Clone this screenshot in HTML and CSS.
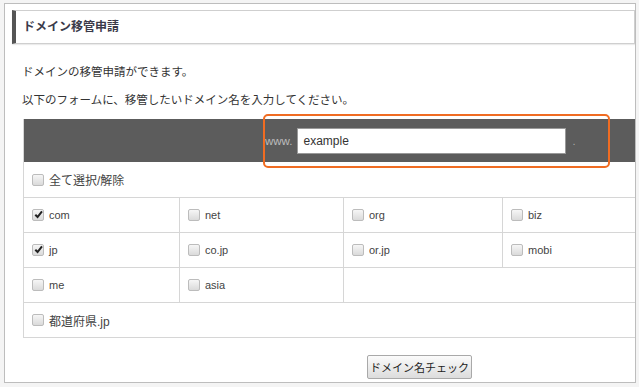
FILE: index.html
```html
<!DOCTYPE html>
<html lang="ja">
<head>
  <meta charset="UTF-8" />
  <title>ドメイン移管申請</title>
  <link rel="stylesheet" href="styles.css">
</head>
<body>

<div id="frame">
  <h2 class="heading">ドメイン移管申請</h2>

  <div class="intro">
    <p>ドメインの移管申請ができます。</p>
    <p>以下のフォームに、移管したいドメイン名を入力してください。</p>
  </div>

  <div class="domain-table">
    <div class="table-head">
      <span class="www">www.</span>
      <span class="name-input">example</span>
      <span class="dot">.</span>
      <div class="highlight"></div>
    </div>

    <div class="row row-full first">
      <div class="cell"><span class="cb"></span>全て選択/解除</div>
    </div>

    <div class="row">
      <div class="cell"><span class="cb checked"><svg viewBox="0 0 12 12"><path d="M2.5 6.2 L5 8.8 L9.8 2.6" /></svg></span>com</div>
      <div class="cell"><span class="cb"></span>net</div>
      <div class="cell"><span class="cb"></span>org</div>
      <div class="cell"><span class="cb"></span>biz</div>
    </div>

    <div class="row">
      <div class="cell"><span class="cb checked"><svg viewBox="0 0 12 12"><path d="M2.5 6.2 L5 8.8 L9.8 2.6" /></svg></span>jp</div>
      <div class="cell"><span class="cb"></span>co.jp</div>
      <div class="cell"><span class="cb"></span>or.jp</div>
      <div class="cell"><span class="cb"></span>mobi</div>
    </div>

    <div class="row">
      <div class="cell"><span class="cb"></span>me</div>
      <div class="cell"><span class="cb"></span>asia</div>
      <div class="cell span2"></div>
    </div>

    <div class="row row-full">
      <div class="cell"><span class="cb"></span>都道府県.jp</div>
    </div>
  </div>

  <div class="actions">
    <button>ドメイン名チェック</button>
  </div>
</div>

</body>
</html>
```

FILE: styles.css
```css
body, html {
  margin: 0;
  background: #f4f4f4;
  font-family: "Liberation Sans", "Noto Sans CJK JP", sans-serif;
  color: #333;
}

#frame {
  margin: 3px 0 0 4px;
  width: 632px;
  height: 380px;
  box-sizing: border-box;
  border: 1px solid #bdbdbd;
  background: white;
  padding: 6px 0 0 7px;
  overflow: hidden;
}

.heading {
  margin: 0;
  height: 34px;
  box-sizing: border-box;
  border: 1px solid #cfcfcf;
  border-left: 4px solid #555;
  padding-left: 7px;
  font-size: 12px;
  line-height: 32px;
  font-weight: bold;
  color: #3a3a4a;
  box-shadow: 0 1px 1px rgb(0 0 0 / 0.08);
}

.intro {
  margin: 14px 0 0 10px;
}

.intro p {
  margin: 0;
  font-size: 11.5px;
  line-height: 28px;
}

.domain-table {
  margin: 5px 0 0 11px;
  width: 640px;
  border-left: 1px solid #d6d6d6;
}

.table-head {
  position: relative;
  height: 43px;
  background: #5c5c5c;
  display: flex;
  align-items: center;
  padding-left: 241px;
}

.www {
  color: #bdbdbd;
  font-size: 11.5px;
}

.name-input {
  margin-left: 5px;
  width: 269px;
  height: 26px;
  box-sizing: border-box;
  border: 1px solid #999;
  background: white;
  padding-left: 5px;
  font-size: 12px;
  line-height: 24px;
  color: #333;
}

.dot {
  margin-left: 6px;
  color: #aaa;
  font-size: 11px;
}

.highlight {
  position: absolute;
  left: 239px;
  top: -5px;
  width: 347px;
  height: 54px;
  box-sizing: border-box;
  border: 2.5px solid #f06c22;
  border-radius: 5px;
}

.row {
  display: grid;
  grid-template-columns: 156px 164px 159px 161px;
  height: 35px;
  box-sizing: border-box;
  border-bottom: 1px solid #d6d6d6;
}

.row.first {
  height: 36px;
}

.row-full {
  grid-template-columns: 1fr;
}

.cell {
  display: flex;
  align-items: center;
  padding-left: 8px;
  font-size: 11px;
  color: #444;
  border-right: 1px solid #d6d6d6;
}

.row-full .cell {
  font-size: 12px;
}

.cell.span2 {
  grid-column: span 2;
}

.cb {
  display: inline-block;
  width: 12px;
  height: 12px;
  box-sizing: border-box;
  margin-right: 5px;
  border: 1px solid #bcbcbc;
  border-radius: 2px;
  background: linear-gradient(#f6f6f6, #dadada);
  position: relative;
}

.cb svg {
  position: absolute;
  left: 0;
  top: -1px;
  width: 11px;
  height: 11px;
  fill: none;
  stroke: #222;
  stroke-width: 2.2;
}

.actions {
  margin: 17px 0 0 355px;
}

button {
  width: 105px;
  height: 24px;
  padding: 0;
  border: 1px solid #a9a9a9;
  border-radius: 2px;
  background: linear-gradient(#fbfbfb, #dcdcdc);
  font-family: "Noto Sans CJK JP", sans-serif;
  font-size: 11px;
  color: #222;
}
```
